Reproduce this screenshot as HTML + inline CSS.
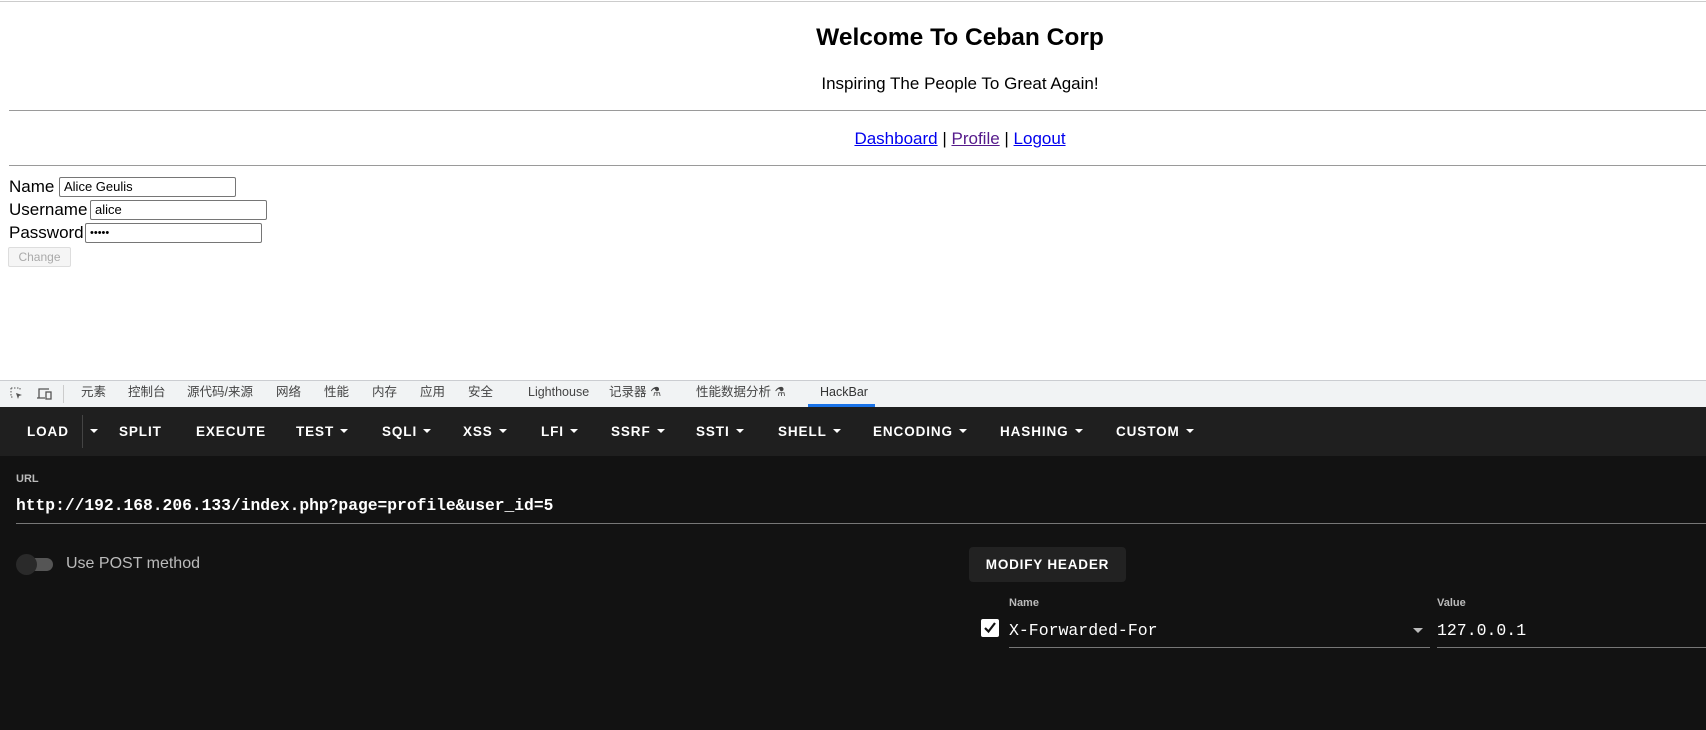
<!DOCTYPE html>
<html><head><meta charset="utf-8"><style>
*{margin:0;padding:0;box-sizing:border-box}
body{width:1706px;height:730px;overflow:hidden;background:#fff;font-family:"Liberation Sans","Noto Sans CJK SC",sans-serif;position:relative}
.a{position:absolute;white-space:nowrap}
.hr{position:absolute;left:9px;right:0;height:1px;background:#9a9a9a}
a{color:#0000ee}
.inp{position:absolute;border:1px solid #767676;border-radius:2px;height:20px;font-size:13px;padding:2px 4px;color:#000;line-height:14px}
.lbl{font-size:17px;color:#000}
.dt{font-size:12.5px;color:#444;top:384px;line-height:16px}
.m{position:absolute;top:407px;height:49px;line-height:49px;color:#fff;font-weight:bold;font-size:13.5px;letter-spacing:0.9px}
.car{display:inline-block;width:0;height:0;border-left:4px solid transparent;border-right:4px solid transparent;border-top:4px solid #fff;vertical-align:middle;margin-left:6px;margin-top:-2px}
</style></head><body>
<div class="a" style="left:0;right:0;top:1px;height:1px;background:#ccc"></div>
<div class="a" style="left:660px;width:600px;text-align:center;top:24px;font-size:24.5px;font-weight:bold;color:#000">Welcome To Ceban Corp</div>
<div class="a" style="left:660px;width:600px;text-align:center;top:74px;font-size:17px;color:#000">Inspiring The People To Great Again!</div>
<div class="hr" style="top:110px"></div>
<div class="a" style="left:660px;width:600px;text-align:center;top:129px;font-size:17px;color:#000"><a href="#">Dashboard</a> | <a href="#" style="color:#551a8b">Profile</a> | <a href="#">Logout</a></div>
<div class="hr" style="top:165px"></div>
<div class="a lbl" style="left:9px;top:177px">Name</div>
<div class="inp" style="left:59px;top:177px;width:177px">Alice Geulis</div>
<div class="a lbl" style="left:9px;top:200px">Username</div>
<div class="inp" style="left:90px;top:200px;width:177px">alice</div>
<div class="a lbl" style="left:9px;top:223px">Password</div>
<div class="inp" style="left:85px;top:223px;width:177px;font-size:11px">•••••</div>
<div class="a" style="left:8px;top:247px;width:63px;height:20px;border:1px solid #ddd;background:#f5f5f5;border-radius:2px;color:#aaa;font-size:12px;text-align:center;line-height:18px">Change</div>

<div class="a" style="left:0;right:0;top:380px;height:27px;background:#f1f3f4;border-top:1px solid #cbcdd1"></div>
<svg class="a" style="left:9px;top:386px" width="16" height="16" viewBox="0 0 16 16"><path d="M2 2h9v2M2 2v9h2" stroke="#555" fill="none" stroke-dasharray="1.5 1.5"/><path d="M7 7l6 2-3 1-1 3z" fill="#555"/></svg>
<svg class="a" style="left:36px;top:386px" width="18" height="16" viewBox="0 0 18 16"><path d="M3 12V3h10M1 12h8" stroke="#555" fill="none" stroke-width="1.3"/><rect x="10" y="6" width="5" height="7" stroke="#555" fill="none" stroke-width="1.3"/></svg>
<div class="a" style="left:63px;top:385px;width:1px;height:18px;background:#ccc"></div>
<div class="a dt" style="left:81px">元素</div>
<div class="a dt" style="left:128px">控制台</div>
<div class="a dt" style="left:187px">源代码/来源</div>
<div class="a dt" style="left:276px">网络</div>
<div class="a dt" style="left:324px">性能</div>
<div class="a dt" style="left:372px">内存</div>
<div class="a dt" style="left:420px">应用</div>
<div class="a dt" style="left:468px">安全</div>
<div class="a dt" style="left:528px">Lighthouse</div>
<div class="a dt" style="left:609px">记录器 ⚗</div>
<div class="a dt" style="left:696px">性能数据分析 ⚗</div>
<div class="a dt" style="left:820px;color:#333">HackBar</div>
<div class="a" style="left:808px;top:404px;width:67px;height:3px;background:#1a73e8"></div>

<div class="a" style="left:0;right:0;top:407px;height:49px;background:#1f1f1f"></div>
<div class="a" style="left:0;right:0;top:456px;height:274px;background:#121212"></div>
<div class="m" style="left:27px">LOAD</div>
<div class="a" style="left:82px;top:415px;width:1px;height:33px;background:#444"></div>
<div class="m" style="left:84px"><span class="car"></span></div>
<div class="m" style="left:119px">SPLIT</div>
<div class="m" style="left:196px">EXECUTE</div>
<div class="m" style="left:296px">TEST<span class="car"></span></div>
<div class="m" style="left:382px">SQLI<span class="car"></span></div>
<div class="m" style="left:463px">XSS<span class="car"></span></div>
<div class="m" style="left:541px">LFI<span class="car"></span></div>
<div class="m" style="left:611px">SSRF<span class="car"></span></div>
<div class="m" style="left:696px">SSTI<span class="car"></span></div>
<div class="m" style="left:778px">SHELL<span class="car"></span></div>
<div class="m" style="left:873px">ENCODING<span class="car"></span></div>
<div class="m" style="left:1000px">HASHING<span class="car"></span></div>
<div class="m" style="left:1116px">CUSTOM<span class="car"></span></div>

<div class="a" style="left:16px;top:473px;font-size:11px;color:#bbb;font-weight:bold">URL</div>
<div class="a" style="left:16px;top:496px;font-size:16.3px;color:#fff;font-family:'Liberation Mono',monospace;font-weight:bold">http://192.168.206.133/index.php?page=profile&amp;user_id=5</div>
<div class="a" style="left:16px;right:0;top:523px;height:1px;background:#777"></div>

<div class="a" style="left:19px;top:558px;width:34px;height:13px;border-radius:7px;background:#555"></div>
<div class="a" style="left:16px;top:554px;width:21px;height:21px;border-radius:50%;background:#2a2a2a"></div>
<div class="a" style="left:66px;top:555px;font-size:16px;color:#bbb">Use POST method</div>

<div class="a" style="left:969px;top:547px;width:157px;height:35px;background:#222;border-radius:4px;color:#fff;font-weight:bold;font-size:13.5px;letter-spacing:0.8px;text-align:center;line-height:35px">MODIFY HEADER</div>
<div class="a" style="left:1009px;top:597px;font-size:11px;color:#bbb;font-weight:bold">Name</div>
<div class="a" style="left:1437px;top:597px;font-size:11px;color:#bbb;font-weight:bold">Value</div>
<div class="a" style="left:981px;top:619px;width:18px;height:18px;background:#fff;border-radius:2px"></div>
<svg class="a" style="left:981px;top:619px" width="18" height="18" viewBox="0 0 18 18"><path d="M4 9l3.5 3.5L14 4" stroke="#121212" stroke-width="2.2" fill="none"/></svg>
<div class="a" style="left:1009px;top:621px;font-size:16.5px;color:#fff;font-family:'Liberation Mono',monospace">X-Forwarded-For</div>
<div class="a" style="left:1413px;top:628px;border-left:5px solid transparent;border-right:5px solid transparent;border-top:5px solid #bbb"></div>
<div class="a" style="left:1009px;top:647px;width:421px;height:1px;background:#777"></div>
<div class="a" style="left:1437px;top:621px;font-size:16.5px;color:#fff;font-family:'Liberation Mono',monospace">127.0.0.1</div>
<div class="a" style="left:1437px;right:0;top:647px;height:1px;background:#777"></div>
</body></html>
